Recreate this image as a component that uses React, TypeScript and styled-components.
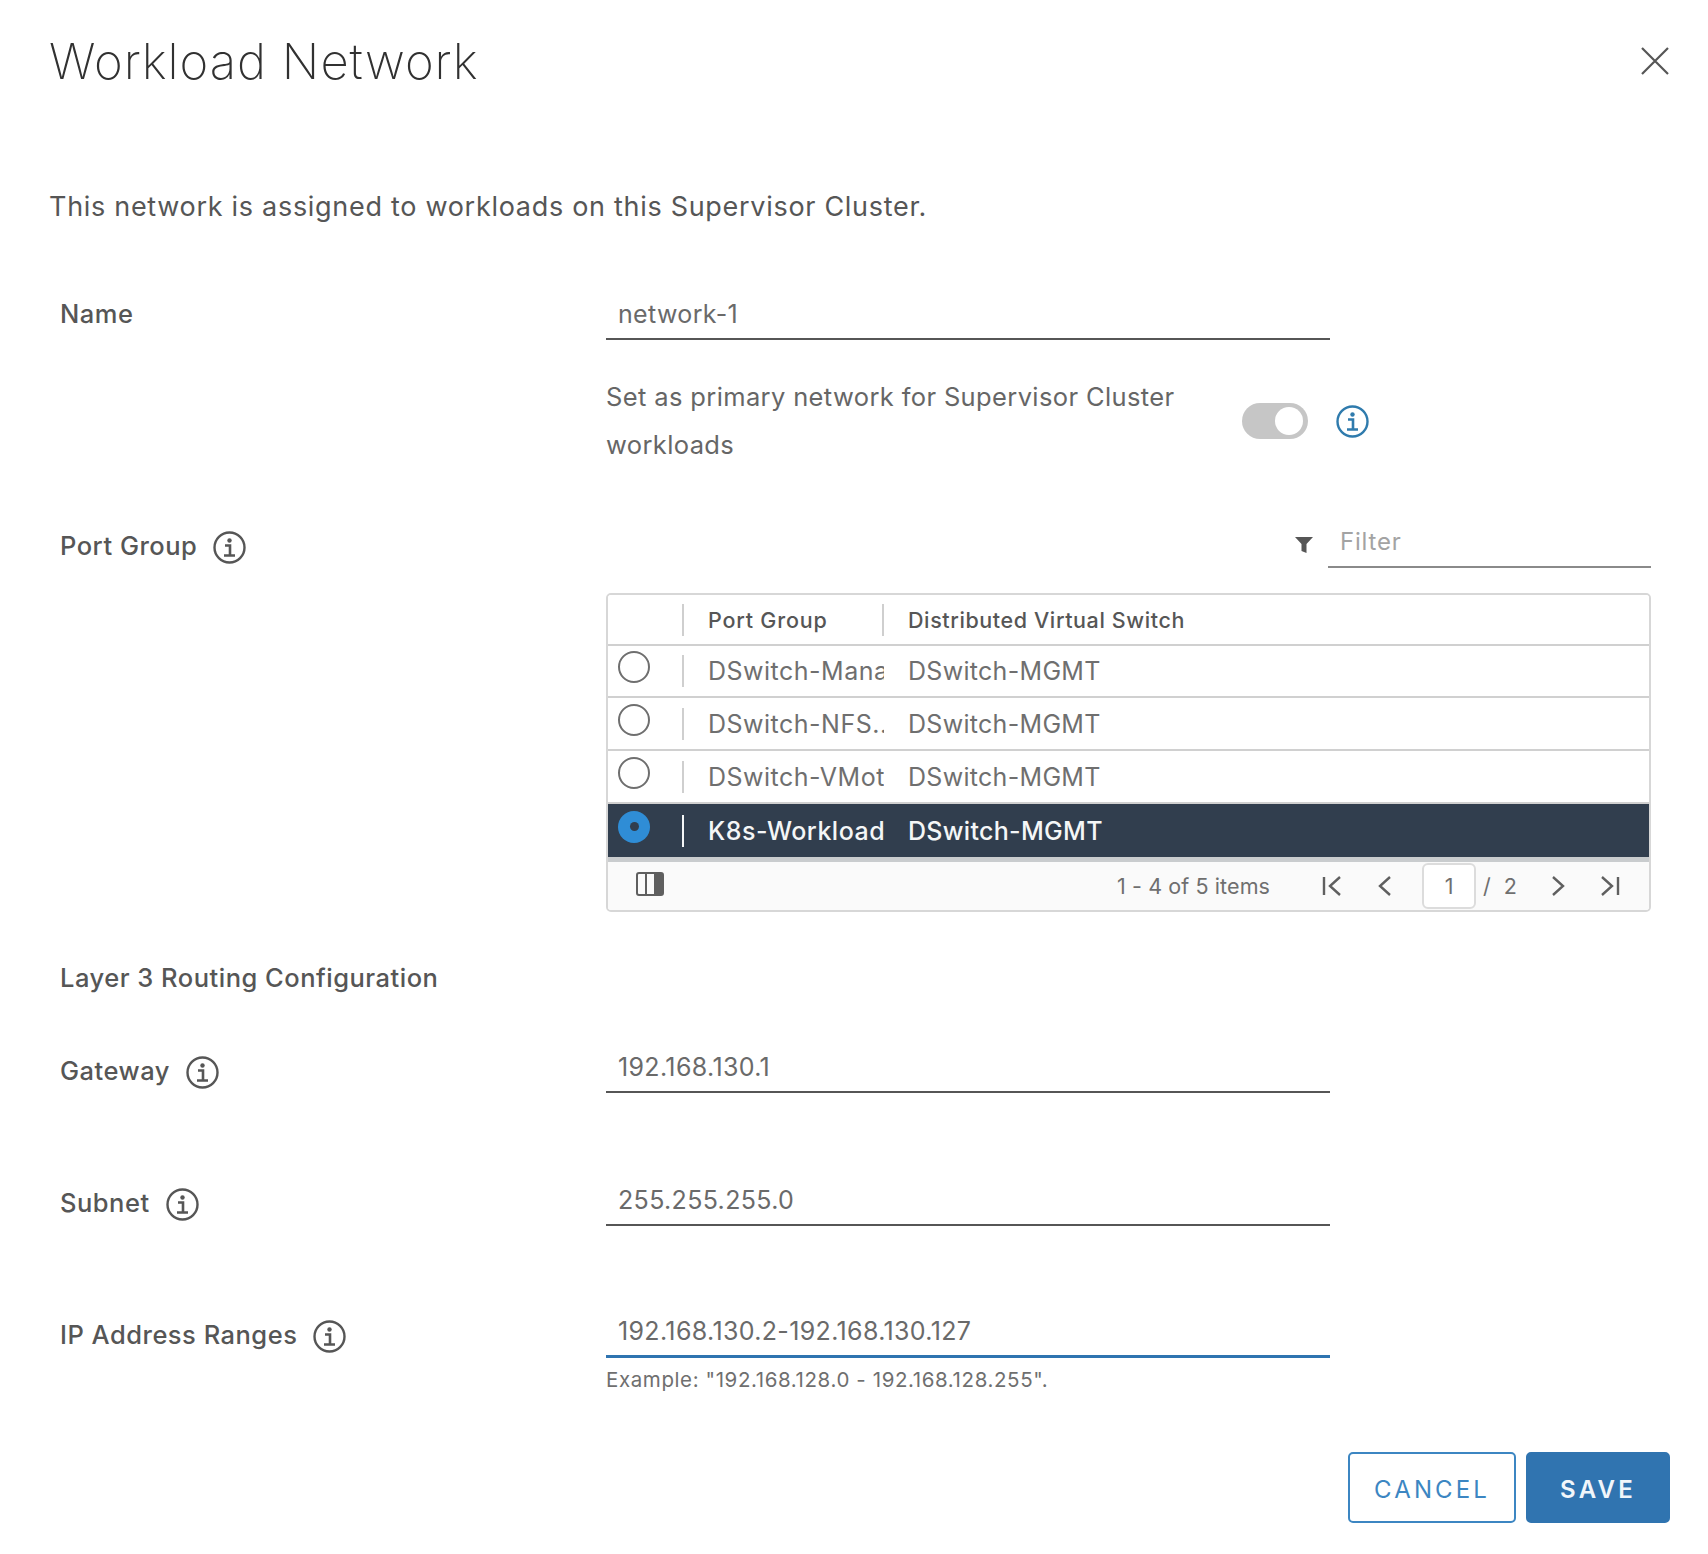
import React from 'react'
import styled, { createGlobalStyle } from 'styled-components'

const GlobalStyle = createGlobalStyle`
  html, body {
    margin: 0;
    padding: 0;
    background: #fff;
  }
  * {
    box-sizing: border-box;
  }
`

const Dialog = styled.div`
  width: 1708px;
  height: 1554px;
  overflow: hidden;
  background: #fff;
  color: #565656;
  font-family: Inter, 'Liberation Sans', sans-serif;
`

const Header = styled.header`
  height: 122px;
  padding: 0 38px 0 49px;
  display: flex;
  align-items: center;
  justify-content: space-between;
`

const Title = styled.h1`
  margin: 0;
  font-size: 49px;
  font-weight: 200;
  letter-spacing: 1px;
  color: #313131;
`

const CloseButton = styled.button`
  width: 30px;
  height: 30px;
  padding: 0;
  border: 0;
  background: none;
  color: #565656;
  display: flex;
`

const Description = styled.p`
  margin: 65px 0 0 49px;
  font-size: 27px;
  line-height: 40px;
  letter-spacing: 0.7px;
`

const Form = styled.div`
  padding: 0 57px 0 60px;
`

const Row = styled.div<{ $top: number }>`
  display: grid;
  grid-template-columns: 546px 1fr;
  margin-top: ${(p) => p.$top}px;
`

const Label = styled.label<{ $offset?: number }>`
  display: flex;
  align-items: center;
  gap: 16px;
  height: 40px;
  margin-top: ${(p) => p.$offset ?? 0}px;
  font-size: 25.5px;
  font-weight: 500;
  letter-spacing: 0.5px;

  svg {
    margin-top: 5px;
  }
`

const Input = styled.input<{ $focused?: boolean }>`
  display: block;
  width: 724px;
  height: 47px;
  padding: 0 12px 4px;
  border: 0;
  border-bottom: ${(p) => (p.$focused ? '3px solid #2f74b0' : '2px solid #565656')};
  outline: 0;
  background: none;
  color: #6a6a6a;
  font-family: inherit;
  font-size: 25px;
  letter-spacing: 0.35px;
`

const PrimaryRow = styled.div`
  display: flex;
  align-items: center;
`

const PrimaryText = styled.div`
  width: 636px;
  font-size: 25.5px;
  line-height: 48px;
  letter-spacing: 0.37px;
  color: #666;
`

const Toggle = styled.span`
  width: 66px;
  height: 36px;
  padding: 0 5px;
  margin-right: 28px;
  border-radius: 18px;
  background: #c6c6c6;
  display: flex;
  align-items: center;
  justify-content: flex-end;

  &::after {
    content: '';
    width: 28px;
    height: 28px;
    border-radius: 50%;
    background: #fff;
  }
`

const FilterBar = styled.div`
  display: flex;
  justify-content: flex-end;
  align-items: center;
  gap: 15px;
`

const FilterInput = styled.input`
  width: 323px;
  height: 47px;
  padding: 0 12px 4px;
  border: 0;
  border-bottom: 2px solid #8a8a8a;
  outline: 0;
  font-family: inherit;
  font-size: 24px;
  letter-spacing: 0.8px;

  &::placeholder {
    color: #a3a3a3;
    opacity: 1;
  }
`

const Table = styled.div`
  margin-top: 25px;
  width: 1045px;
  border: 2px solid #d7d7d7;
  border-radius: 5px;
  overflow: hidden;
`

const NameCell = styled.div`
  width: 200px;
  padding-left: 24px;
  overflow: hidden;
  white-space: nowrap;
  letter-spacing: 0.5px;
`

const SwitchCell = styled.div`
  padding-left: 24px;
  white-space: nowrap;
  letter-spacing: 0.3px;
`

const TableRow = styled.div<{ $height: number; $selected?: boolean }>`
  height: ${(p) => p.$height}px;
  display: flex;
  align-items: center;
  border-bottom: ${(p) => (p.$selected ? '5px solid #c9ccce' : '2px solid #d0d0d0')};
  background: ${(p) => (p.$selected ? '#313e4e' : '#fff')};
  color: ${(p) => (p.$selected ? '#f4f6f7' : '#6f6f6f')};
  font-size: 25px;
  font-weight: ${(p) => (p.$selected ? 500 : 400)};
`

const HeaderRow = styled(TableRow)`
  color: #565656;
  font-size: 21.5px;
  font-weight: 500;

  ${NameCell} {
    width: 198px;
    letter-spacing: 0.8px;
  }
  ${SwitchCell} {
    letter-spacing: 0.6px;
  }
`

const RadioSlot = styled.div`
  width: 74px;
  padding: 0 0 8px 10px;
  display: flex;
`

const Radio = styled.span<{ $checked?: boolean }>`
  width: 32px;
  height: 32px;
  border-radius: 50%;
  display: flex;
  align-items: center;
  justify-content: center;
  background: ${(p) => (p.$checked ? '#2f8dd6' : '#fff')};
  border: ${(p) => (p.$checked ? '0' : '2px solid #6f6f6f')};

  &::after {
    content: '';
    width: 9px;
    height: 9px;
    border-radius: 50%;
    background: ${(p) => (p.$checked ? '#313e4e' : 'transparent')};
  }
`

const Divider = styled.span<{ $dark?: boolean }>`
  flex: none;
  width: 2px;
  height: 32px;
  background: ${(p) => (p.$dark ? '#f4f6f7' : '#cfcfcf')};
`

const TableFooter = styled.div`
  height: 48px;
  padding: 0 27px 0 28px;
  display: flex;
  align-items: center;
  background: #fafafa;
  color: #6f6f6f;
  font-size: 21.5px;
`

const ColumnToggle = styled.svg`
  width: 28px;
  height: 24px;
  margin: -4px auto 0 0;
`

const ItemCount = styled.span`
  width: 203px;
  letter-spacing: 0.1px;
`

const PageInput = styled.span`
  width: 54px;
  height: 46px;
  margin-left: 5px;
  border: 2px solid #dcdcdc;
  border-radius: 6px;
  background: #fff;
  display: flex;
  align-items: center;
  justify-content: center;
`

const PageTotal = styled.span`
  width: 70px;
  padding-left: 7px;
  letter-spacing: 3.5px;
`

const PagerIcon = styled.svg<{ $gap?: number }>`
  width: 24px;
  height: 24px;
  margin-right: ${(p) => p.$gap ?? 29}px;
  fill: none;
  stroke: #5f5f5f;
  stroke-width: 2.4;

  &:last-child {
    margin-right: 0;
  }
`

const SectionTitle = styled.div`
  margin-top: 45px;
  height: 40px;
  display: flex;
  align-items: center;
  font-size: 25.5px;
  font-weight: 500;
  letter-spacing: 0.5px;
`

const Hint = styled.div`
  margin: 7px 0 0 546px;
  font-size: 20.5px;
  line-height: 30px;
  letter-spacing: 0.6px;
  color: #6f6f6f;
`

const Footer = styled.footer`
  margin-top: 57px;
  padding-right: 38px;
  display: flex;
  justify-content: flex-end;
  gap: 10px;
`

const Button = styled.button<{ $primary?: boolean }>`
  height: 71px;
  width: ${(p) => (p.$primary ? 144 : 168)}px;
  padding: 3px 0 0;
  border: 2px solid ${(p) => (p.$primary ? '#3074b0' : '#3c86c2')};
  border-radius: 5px;
  background: ${(p) => (p.$primary ? '#3074b0' : '#fff')};
  color: ${(p) => (p.$primary ? '#f1f6fa' : '#3c86c2')};
  font-family: inherit;
  font-size: 24px;
  font-weight: ${(p) => (p.$primary ? 600 : 400)};
  letter-spacing: ${(p) => (p.$primary ? 3.2 : 3.1)}px;
`

const InfoSvg = styled.svg<{ $blue?: boolean }>`
  flex: none;
  width: 33px;
  height: 33px;
  color: ${(p) => (p.$blue ? '#2f7bad' : '#565656')};
`

function InfoIcon({ blue }: { blue?: boolean }) {
  return (
    <InfoSvg $blue={blue} viewBox="0 0 33 33" fill="none" stroke="currentColor">
      <circle cx="16.5" cy="16.5" r="15" strokeWidth="2.4" />
      <circle cx="16.5" cy="9.5" r="2.2" fill="currentColor" stroke="none" />
      <path d="M12 14.5h5v9.5M11 24.5h11" strokeWidth="2.6" />
    </InfoSvg>
  )
}

const rows = [
  { name: 'DSwitch-Management', height: 52 },
  { name: 'DSwitch-NFS..', height: 53 },
  { name: 'DSwitch-VMotion', height: 53 },
]

export default function App() {
  return (
    <Dialog>
      <GlobalStyle />
      <Header>
        <Title>Workload Network</Title>
        <CloseButton aria-label="Close">
          <svg width="30" height="30" viewBox="0 0 30 30" stroke="currentColor" strokeWidth="2.2">
            <path d="M2 2l26 26M28 2L2 28" />
          </svg>
        </CloseButton>
      </Header>
      <Description>This network is assigned to workloads on this Supervisor Cluster.</Description>
      <Form>
        <Row $top={66}>
          <Label>Name</Label>
          <Input readOnly value="network-1" />
        </Row>
        <Row $top={33}>
          <span />
          <PrimaryRow>
            <PrimaryText>
              Set as primary network for Supervisor Cluster
              <br />
              workloads
            </PrimaryText>
            <Toggle />
            <InfoIcon blue />
          </PrimaryRow>
        </Row>
        <Row $top={52}>
          <Label $offset={4}>
            Port Group <InfoIcon />
          </Label>
          <div>
            <FilterBar>
              <svg width="18" height="18" viewBox="0 0 18 18" fill="#565656">
                <path d="M0 1h18l-6.5 7v9l-5-2V8z" />
              </svg>
              <FilterInput placeholder="Filter" />
            </FilterBar>
            <Table>
              <HeaderRow $height={51}>
                <RadioSlot />
                <Divider />
                <NameCell>Port Group</NameCell>
                <Divider />
                <SwitchCell>Distributed Virtual Switch</SwitchCell>
              </HeaderRow>
              {rows.map((r) => (
                <TableRow key={r.name} $height={r.height}>
                  <RadioSlot>
                    <Radio />
                  </RadioSlot>
                  <Divider />
                  <NameCell>{r.name}</NameCell>
                  <SwitchCell>DSwitch-MGMT</SwitchCell>
                </TableRow>
              ))}
              <TableRow $height={58} $selected>
                <RadioSlot>
                  <Radio $checked />
                </RadioSlot>
                <Divider $dark />
                <NameCell>K8s-Workload</NameCell>
                <SwitchCell>DSwitch-MGMT</SwitchCell>
              </TableRow>
              <TableFooter>
                <ColumnToggle viewBox="0 0 28 24">
                  <rect x="1" y="1" width="26" height="22" rx="2" fill="none" stroke="#5f5f5f" strokeWidth="2" />
                  <path d="M10 1v22" stroke="#5f5f5f" strokeWidth="2" />
                  <rect x="18" y="1" width="9" height="22" fill="#5f5f5f" />
                </ColumnToggle>
                <ItemCount>1 - 4 of 5 items</ItemCount>
                <PagerIcon viewBox="0 0 24 24">
                  <path d="M4 3v18M20 3l-10 9 10 9" />
                </PagerIcon>
                <PagerIcon viewBox="0 0 24 24" $gap={20}>
                  <path d="M17 3L7 12l10 9" />
                </PagerIcon>
                <PageInput>1</PageInput>
                <PageTotal>/ 2</PageTotal>
                <PagerIcon viewBox="0 0 24 24" $gap={28}>
                  <path d="M7 3l10 9-10 9" />
                </PagerIcon>
                <PagerIcon viewBox="0 0 24 24">
                  <path d="M4 3l10 9-10 9M20 3v18" />
                </PagerIcon>
              </TableFooter>
            </Table>
          </div>
        </Row>
        <SectionTitle>Layer 3 Routing Configuration</SectionTitle>
        <Row $top={49}>
          <Label $offset={4}>
            Gateway <InfoIcon />
          </Label>
          <Input readOnly value="192.168.130.1" />
        </Row>
        <Row $top={86}>
          <Label $offset={3}>
            Subnet <InfoIcon />
          </Label>
          <Input readOnly value="255.255.255.0" />
        </Row>
        <Row $top={85}>
          <Label $offset={3}>
            IP Address Ranges <InfoIcon />
          </Label>
          <Input readOnly $focused value="192.168.130.2-192.168.130.127" />
        </Row>
        <Hint>Example: "192.168.128.0 - 192.168.128.255".</Hint>
      </Form>
      <Footer>
        <Button>CANCEL</Button>
        <Button $primary>SAVE</Button>
      </Footer>
    </Dialog>
  )
}
